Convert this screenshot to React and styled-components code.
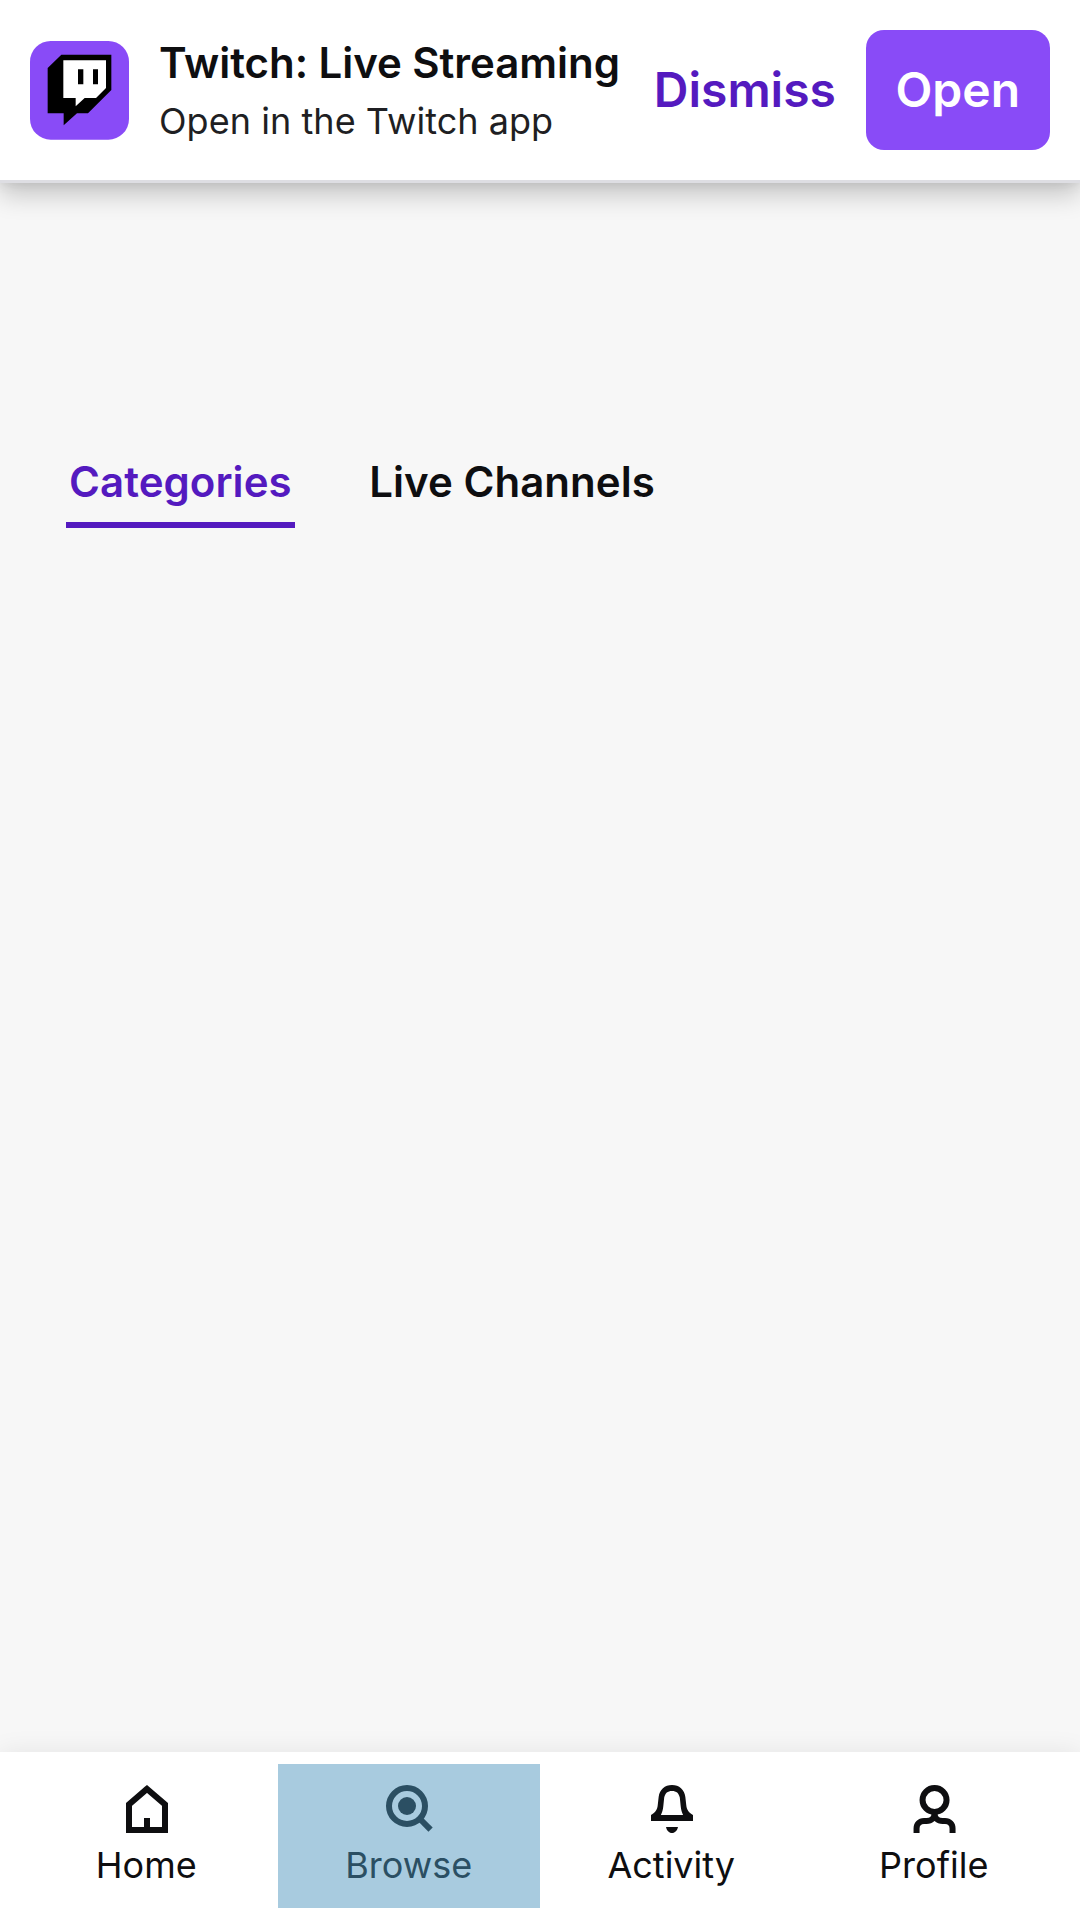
import React from "react";
import styled, { createGlobalStyle } from "styled-components";

const GlobalStyle = createGlobalStyle`
  * { box-sizing: border-box; }
  body {
    margin: 0;
    background: #f7f7f7;
    font-family: Inter, Roboto, "Liberation Sans", sans-serif;
    color: #0e0e10;
  }
`;

const Page = styled.div`
  display: flex;
  flex-direction: column;
  height: 1920px;
  background: #f7f7f7;
  overflow: hidden;
`;

const Banner = styled.header`
  display: flex;
  align-items: center;
  flex: none;
  height: 183px;
  padding: 0 30px;
  background: #fff;
  border-bottom: 3px solid #dedee3;
  box-shadow: 0 12px 24px rgba(0, 0, 0, 0.2), 0 0 12px rgba(0, 0, 0, 0.1);
`;

const AppIcon = styled.svg`
  display: block;
  flex: none;
  width: 99px;
  height: 99px;
`;

const AppInfo = styled.div`
  flex: 1;
  min-width: 0;
  padding: 0 0 2px 30px;
  white-space: nowrap;
`;

const AppName = styled.div`
  font-size: 42px;
  font-weight: 600;
  line-height: 63px;
  letter-spacing: -0.05px;
`;

const AppHint = styled.div`
  font-size: 36px;
  line-height: 54px;
  letter-spacing: 0.05px;
  color: #1f1f23;
`;

const Actions = styled.div`
  display: flex;
  align-items: center;
  gap: 30px;
`;

const ActionButton = styled.button`
  height: 120px;
  padding: 0 ${(p) => (p.$primary ? "30px 2px 29.5px" : "0 2px")};
  border: 0;
  border-radius: 18px;
  background: ${(p) => (p.$primary ? "#894bf7" : "transparent")};
  color: ${(p) => (p.$primary ? "#fff" : "#541abf")};
  font: 600 48px Inter, sans-serif;
`;

const Tabs = styled.nav`
  display: flex;
  flex: 1;
  align-items: flex-start;
  gap: 71px;
  padding: 267px 66px 0;
`;

const Tab = styled.a`
  padding: 0 3.5px 9px 3px;
  border-bottom: 6px solid ${(p) => (p.$active ? "#541abf" : "transparent")};
  color: ${(p) => (p.$active ? "#541abf" : "#0e0e10")};
  font-size: 42px;
  font-weight: 600;
  line-height: 63px;
  letter-spacing: 0.05px;
`;

const BottomNav = styled.nav`
  display: flex;
  flex: none;
  height: 168px;
  padding: 12px 15px;
  background: #fff;
  box-shadow: 0 0 24px rgba(0, 0, 0, 0.08);
`;

const NavItem = styled.a`
  display: flex;
  flex: 1 1 0;
  flex-direction: column;
  align-items: center;
  padding-top: 15px;
  background: ${(p) => (p.$pressed ? "#a8cbdf" : "transparent")};
  color: ${(p) => (p.$pressed ? "#2b4f63" : "#0e0e10")};
`;

const NavIcon = styled.svg`
  display: block;
  width: 60px;
  height: 60px;
  margin-left: 1.5px;
  fill: none;
  stroke: currentColor;
  stroke-width: 2;
`;

const NavLabel = styled.span`
  margin-top: -1px;
  font-size: 36px;
  line-height: 54px;
`;

const icons = {
  Home: <path d="M10 3.3 4 8.45V17h12V8.45zM10 17v-4" />,
  Browse: (
    <>
      <circle cx="9" cy="9" r="6" />
      <circle cx="9" cy="9" r="3" fill="currentColor" stroke="none" />
      <path d="m13 13 3.85 3.85" />
    </>
  ),
  Activity: (
    <path
      fill="currentColor"
      stroke="none"
      fillRule="evenodd"
      d="M3 14v-2c1.500-.8 2.100-1.700 2.250-3.300l.3-2.700C5.850 3.500 7.600 2 10 2s4.150 1.500 4.450 4l.3 2.700c.15 1.600.75 2.500 2.250 3.300v2zM6.300 12h7.400c-.4-.8-.7-1.800-.8-2.900l-.3-2.900C12.250 4.700 11.500 4 10 4S7.750 4.700 7.400 6.200l-.3 2.900c-.1 1.100-.4 2.100-.8 2.900zM8 16h4c-.25 1.200-1 2-2 2s-1.750-.8-2-2z"
    />
  ),
  Profile: (
    <g transform="translate(-0.15 0)">
      <circle cx="10" cy="7" r="4" />
      <path d="M4 18v-1.500C4 15 5 14 6.500 14H7.300C9 14 10 13 10 11.500C10 13 11 14 12.700 14h.8C15 14 16 15 16 16.500V18" />
    </g>
  ),
};

export default function App() {
  return (
    <Page>
      <GlobalStyle />
      <Banner>
        <AppIcon viewBox="0 0 297 297">
          <rect width="297" height="296" rx="62" fill="#894bf7" />
          <path d="M53 81 94 41H244V147L174 217H141L101 253V217H53z" fill="#000" />
          <path d="M100 58H228V141L198 171H164L137 196V171H100z" fill="#fff" />
          <path d="M144 85h16v45h-16zM189 85h15v45h-15z" fill="#000" />
        </AppIcon>
        <AppInfo>
          <AppName>Twitch: Live Streaming</AppName>
          <AppHint>Open in the Twitch app</AppHint>
        </AppInfo>
        <Actions>
          <ActionButton>Dismiss</ActionButton>
          <ActionButton $primary>Open</ActionButton>
        </Actions>
      </Banner>
      <Tabs>
        <Tab $active>Categories</Tab>
        <Tab>Live Channels</Tab>
      </Tabs>
      <BottomNav>
        {Object.entries(icons).map(([label, icon]) => (
          <NavItem key={label} $pressed={label === "Browse"}>
            <NavIcon viewBox="0 0 20 20">{icon}</NavIcon>
            <NavLabel>{label}</NavLabel>
          </NavItem>
        ))}
      </BottomNav>
    </Page>
  );
}
